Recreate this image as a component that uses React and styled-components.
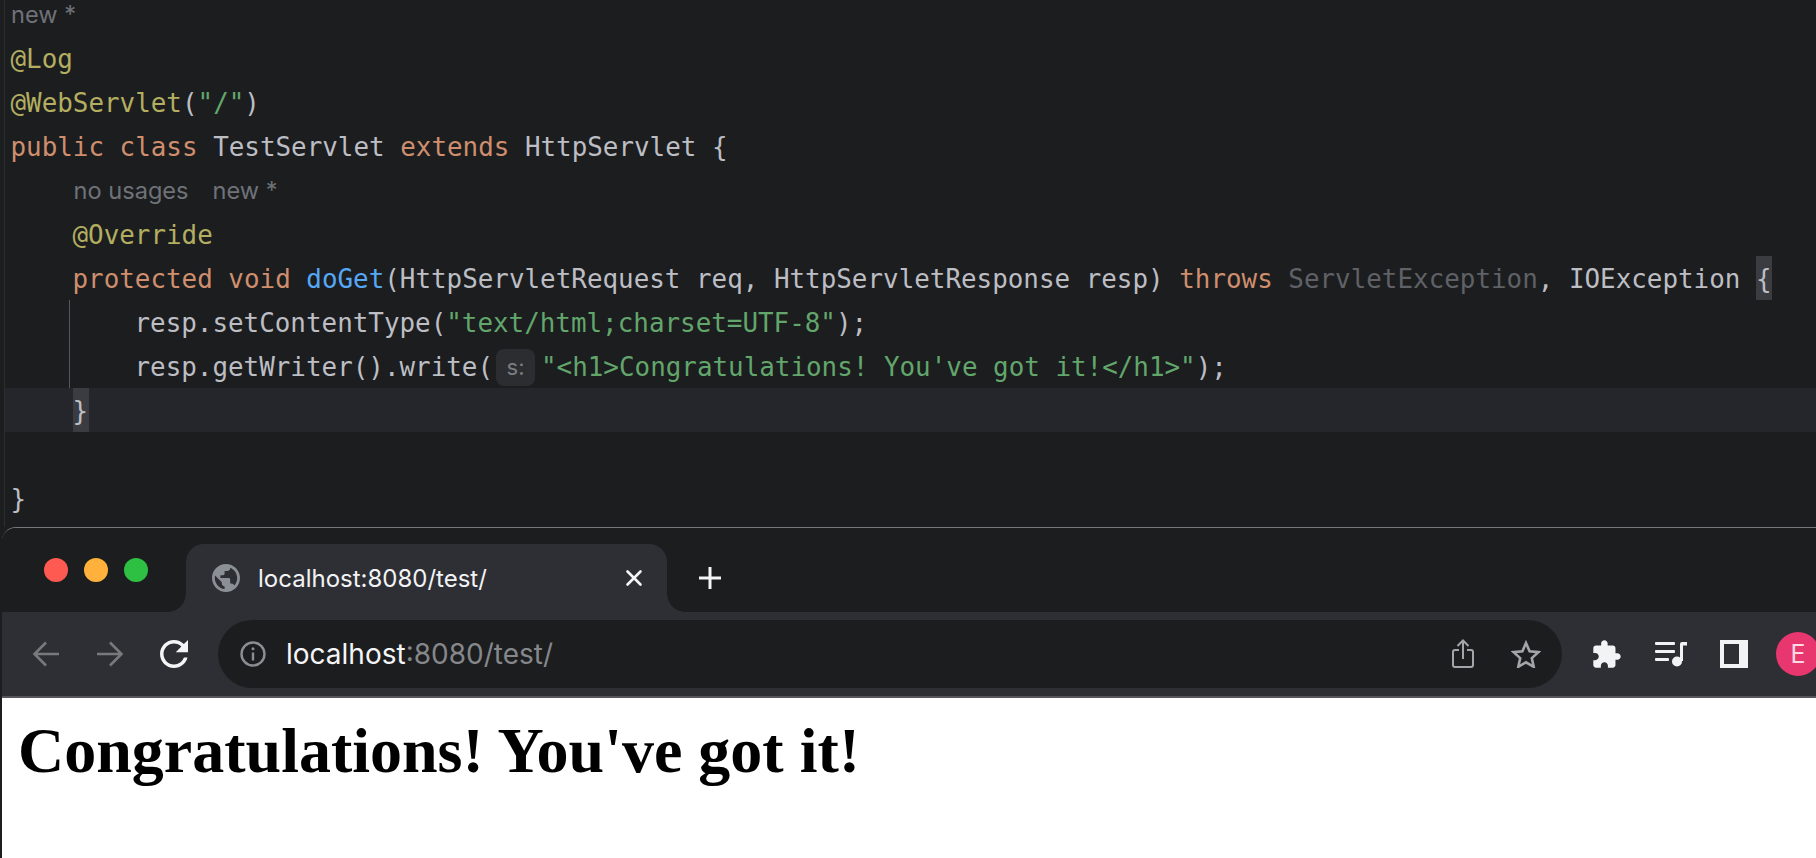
import React from "react";
import styled, { createGlobalStyle } from "styled-components";

const Global = createGlobalStyle`
  html, body {
    margin: 0;
    padding: 0;
    background: #1c1d1f;
  }
  #root {
    height: 858px;
    overflow: hidden;
  }
`;

const tokenColors = {
  key: "#cf8e6d",
  note: "#b3ae60",
  str: "#62a66c",
  fn: "#56a8f5",
  dim: "#5f6166",
  plain: "#bcbec4",
};

const Page = styled.div`
  width: 1816px;
  height: 858px;
  overflow: hidden;
  display: flex;
  flex-direction: column;
  background: #1c1d1f;
`;

const Editor = styled.div`
  height: 527px;
  flex: none;
  overflow: hidden;
  border-left: 1px solid #2b2d30;
  margin-left: 4px;
`;

const Lines = styled.div`
  margin-top: -8px;
`;

const Line = styled.div`
  position: relative;
  height: 44px;
  line-height: 46px;
  margin-left: -4px;
  font-family: "DejaVu Sans Mono", "Liberation Mono", monospace;
  font-size: 25.9px;
  color: #bcbec4;
  white-space: pre;
  background: ${(p) => (p.$current ? "#25262b" : "transparent")};
  box-sizing: border-box;
  padding-left: ${(p) => 9.5 + (p.$indent || 0) * 15.5}px;
`;

const Guide = styled.span`
  position: absolute;
  left: 68px;
  top: 0;
  bottom: 0;
  width: 1px;
  background: #55575c;
`;

const Token = styled.span`
  color: ${(p) => tokenColors[p.$kind] || tokenColors.plain};
`;

const Brace = styled.span`
  display: inline-block;
  height: 44px;
  width: 16px;
  vertical-align: top;
  background: #3a3c41;
`;

const Hint = styled.div`
  height: 44px;
  line-height: 46px;
  margin-left: -4px;
  padding-left: ${(p) => 10 + (p.$indent || 0) * 15.63}px;
  font-family: Inter, "Liberation Sans", sans-serif;
  font-size: 23.6px;
  color: #6f7278;
  white-space: pre;
`;

const HintGap = styled.span`
  display: inline-block;
  width: 24px;
`;

const ParamHint = styled.span`
  display: inline-flex;
  align-items: center;
  justify-content: center;
  width: 39px;
  height: 37px;
  margin: 0 6px 0 3px;
  vertical-align: 1px;
  border-radius: 8px;
  background: #2b2d30;
  font-family: Inter, "Liberation Sans", sans-serif;
  font-size: 22px;
  line-height: 37px;
  color: #7a7d83;
`;

const Browser = styled.div`
  flex: 1;
  margin-left: 2px;
  width: 1830px;
  display: flex;
  flex-direction: column;
  border-top: 1px solid #77787c;
  border-top-left-radius: 14px;
  overflow: hidden;
  background: #1c1d1f;
`;

const TabStrip = styled.div`
  height: 84px;
  flex: none;
  display: flex;
  align-items: flex-end;
  background: #1c1d1f;
`;

const Lights = styled.div`
  display: flex;
  gap: 16px;
  align-self: flex-start;
  margin: 30px 0 0 42px;
`;

const Light = styled.span`
  width: 24px;
  height: 24px;
  border-radius: 50%;
  background: ${(p) => p.$color};
`;

const Tab = styled.div`
  position: relative;
  width: 481px;
  height: 68px;
  margin-left: 38px;
  box-sizing: border-box;
  padding: 0 24px 0 26px;
  display: flex;
  align-items: center;
  gap: 18px;
  border-radius: 18px 18px 0 0;
  background: #2e2f34;
  font-family: Inter, "Liberation Sans", sans-serif;
  font-size: 24px;
  color: #f2f3f5;

  &::before,
  &::after {
    content: "";
    position: absolute;
    bottom: 0;
    width: 18px;
    height: 18px;
  }
  &::before {
    left: -18px;
    background: radial-gradient(circle at 0 0, #1c1d1f 17.5px, #2e2f34 18px);
  }
  &::after {
    right: -18px;
    background: radial-gradient(circle at 100% 0, #1c1d1f 17.5px, #2e2f34 18px);
  }
`;

const TabTitle = styled.span`
  flex: 1;
`;

const NewTab = styled.span`
  display: flex;
  align-self: center;
  margin-left: 31px;
  margin-top: 16px;
`;

const Toolbar = styled.div`
  height: 84px;
  flex: none;
  display: flex;
  align-items: center;
  background: #2e2f34;
  border-bottom: 2px solid #55565b;
`;

const NavIcons = styled.div`
  display: flex;
  align-items: center;
  gap: 36px;
  width: 216px;
  box-sizing: border-box;
  padding-left: 30px;
`;

const AddressBar = styled.div`
  width: 1344px;
  height: 68px;
  flex: none;
  box-sizing: border-box;
  padding: 0 22px 0 22px;
  display: flex;
  align-items: center;
  border-radius: 34px;
  background: #1c1d1f;
  font-family: Inter, "Liberation Sans", sans-serif;
  font-size: 28px;
`;

const Host = styled.span`
  margin-left: 20px;
  color: #f4f5f6;
`;

const Rest = styled.span`
  flex: 1;
  color: #85878a;
`;

const BarActions = styled.div`
  display: flex;
  align-items: center;
  gap: 37px;
  margin-right: -1px;
`;

const Extensions = styled.div`
  display: flex;
  align-items: center;
  gap: 33px;
  margin-left: 30px;
`;

const Avatar = styled.span`
  width: 44px;
  height: 44px;
  flex: none;
  margin-left: -5px;
  display: flex;
  align-items: center;
  justify-content: center;
  border-radius: 50%;
  background: #e8366f;
  font-family: Inter, "Liberation Sans", sans-serif;
  font-size: 25px;
  color: #ffd9e4;
`;

const Content = styled.div`
  flex: 1;
  background: #fff;
`;

const Heading = styled.h1`
  margin: 0;
  padding: 16px 0 0 16px;
  font-family: "Liberation Serif", "Times New Roman", serif;
  font-size: 64px;
  line-height: 74px;
  font-weight: 700;
  color: #000;
  white-space: nowrap;
`;

const GlobeIcon = () => (
  <svg width="28" height="28" viewBox="2 2 20 20" fill="#8b8f96">
    <path d="M12 2C6.48 2 2 6.48 2 12s4.48 10 10 10 10-4.48 10-10S17.52 2 12 2zm-1 17.93c-3.95-.49-7-3.85-7-7.93 0-.62.08-1.21.21-1.79L9 15v1c0 1.1.9 2 2 2v1.93zm6.9-2.54c-.26-.81-1-1.39-1.9-1.39h-1v-3c0-.55-.45-1-1-1H8v-2h2c.55 0 1-.45 1-1V7h2c1.1 0 2-.9 2-2v-.41c2.93 1.19 5 4.06 5 7.41 0 2.08-.8 3.97-2.1 5.39z" />
  </svg>
);

const CloseIcon = () => (
  <svg width="18" height="18" viewBox="0 0 18 18" stroke="#f4f5f6" strokeWidth="2.6" strokeLinecap="round">
    <path d="M2.5 2.5l13 13M15.5 2.5l-13 13" />
  </svg>
);

const PlusIcon = () => (
  <svg width="24" height="24" viewBox="0 0 24 24" stroke="#f4f5f6" strokeWidth="3">
    <path d="M12 1v22M1 12h22" />
  </svg>
);

const ArrowIcon = ({ flip }) => (
  <svg width="28" height="28" viewBox="0 0 28 28" fill="none" stroke="#77797d" strokeWidth="2.6" transform={flip ? "scale(-1 1)" : undefined}>
    <path d="M27 14H3M14 2.5L2.5 14 14 25.5" />
  </svg>
);

const ReloadIcon = () => (
  <svg width="28" height="28" viewBox="4 4 16 16" fill="#f4f5f6">
    <path d="M17.65 6.35C16.2 4.9 14.21 4 12 4c-4.42 0-7.99 3.58-7.99 8s3.57 8 7.99 8c3.73 0 6.84-2.55 7.73-6h-2.08c-.82 2.33-3.04 4-5.65 4-3.31 0-6-2.69-6-6s2.69-6 6-6c1.66 0 3.14.69 4.22 1.78L13 11h7V4l-2.35 2.35z" />
  </svg>
);

const InfoIcon = () => (
  <svg width="26" height="26" viewBox="0 0 26 26" fill="none" stroke="#8b8e93" strokeWidth="2.4">
    <circle cx="13" cy="13" r="11.5" />
    <path d="M13 11.5v8" />
    <circle cx="13" cy="7.8" r="1.5" fill="#8b8e93" stroke="none" />
  </svg>
);

const ShareIcon = () => (
  <svg width="22" height="30" viewBox="0 0 22 30" fill="none" stroke="#a3a5a8" strokeWidth="2">
    <path d="M7 11H3a2 2 0 0 0-2 2v13a2 2 0 0 0 2 2h16a2 2 0 0 0 2-2V13a2 2 0 0 0-2-2h-4" />
    <path d="M11 20V2M5.5 7L11 1.5 16.5 7" />
  </svg>
);

const StarIcon = () => (
  <svg width="30" height="28" viewBox="0 0 30 28" fill="none" stroke="#a3a5a8" strokeWidth="2.6">
    <path d="M15 3l3.6 8.2 8.9.9-6.7 6 1.9 8.7L15 22.3l-7.7 4.5 1.9-8.7-6.7-6 8.9-.9z" />
  </svg>
);

const PuzzleIcon = () => (
  <svg width="30" height="30" viewBox="1 0 23 23" fill="#f2f3f5">
    <path d="M20.5 11H19V7c0-1.1-.9-2-2-2h-4V3.5C13 2.12 11.88 1 10.5 1S8 2.12 8 3.5V5H4c-1.1 0-1.99.9-1.99 2v3.8H3.5c1.49 0 2.7 1.21 2.7 2.7s-1.21 2.7-2.7 2.7H2V20c0 1.1.9 2 2 2h3.8v-1.5c0-1.49 1.21-2.7 2.7-2.7 1.49 0 2.7 1.21 2.7 2.7V22H17c1.1 0 2-.9 2-2v-4h1.5c1.38 0 2.5-1.12 2.5-2.5S21.88 11 20.5 11z" />
  </svg>
);

const QueueIcon = () => (
  <svg width="32" height="26" viewBox="0 0 32 26" fill="#f2f3f5">
    <rect x="0" y="1" width="20" height="3" rx="1" />
    <rect x="0" y="9" width="20" height="3" rx="1" />
    <rect x="0" y="17" width="14" height="3" rx="1" />
    <circle cx="22" cy="20.5" r="5" />
    <path d="M25 20V3a2 2 0 0 1 2-2h5v3.4h-4V20z" />
  </svg>
);

const SidebarIcon = () => (
  <svg width="28" height="28" viewBox="0 0 28 28">
    <rect width="28" height="28" fill="#f2f3f5" />
    <rect x="4" y="4" width="15" height="20" fill="#2e2f34" />
  </svg>
);

export default function App() {
  return (
    <Page>
      <Global />
      <Editor>
        <Lines>
          <Hint>new *</Hint>
          <Line>
            <Token $kind="note">@Log</Token>
          </Line>
          <Line>
            <Token $kind="note">@WebServlet</Token>(<Token $kind="str">"/"</Token>)
          </Line>
          <Line>
            <Token $kind="key">public class </Token>TestServlet <Token $kind="key">extends </Token>HttpServlet {"{"}
          </Line>
          <Hint $indent={4}>
            no usages
            <HintGap />
            new *
          </Hint>
          <Line $indent={4}>
            <Token $kind="note">@Override</Token>
          </Line>
          <Line $indent={4}>
            <Token $kind="key">protected void </Token>
            <Token $kind="fn">doGet</Token>(HttpServletRequest req, HttpServletResponse resp){" "}
            <Token $kind="key">throws </Token>
            <Token $kind="dim">ServletException</Token>, IOException <Brace>{"{"}</Brace>
          </Line>
          <Line $indent={8}>
            <Guide />
            resp.setContentType(<Token $kind="str">"text/html;charset=UTF-8"</Token>);
          </Line>
          <Line $indent={8}>
            <Guide />
            resp.getWriter().write(<ParamHint>s:</ParamHint>
            <Token $kind="str">"&lt;h1&gt;Congratulations! You've got it!&lt;/h1&gt;"</Token>);
          </Line>
          <Line $indent={4} $current>
            <Brace>{"}"}</Brace>
          </Line>
          <Line />
          <Line>{"}"}</Line>
        </Lines>
      </Editor>
      <Browser>
        <TabStrip>
          <Lights>
            <Light $color="#ff5a52" />
            <Light $color="#ffb13b" />
            <Light $color="#2dc043" />
          </Lights>
          <Tab>
            <GlobeIcon />
            <TabTitle>localhost:8080/test/</TabTitle>
            <CloseIcon />
          </Tab>
          <NewTab>
            <PlusIcon />
          </NewTab>
        </TabStrip>
        <Toolbar>
          <NavIcons>
            <ArrowIcon />
            <ArrowIcon flip />
            <ReloadIcon />
          </NavIcons>
          <AddressBar>
            <InfoIcon />
            <Host>localhost</Host>
            <Rest>:8080/test/</Rest>
            <BarActions>
              <ShareIcon />
              <StarIcon />
            </BarActions>
          </AddressBar>
          <Extensions>
            <PuzzleIcon />
            <QueueIcon />
            <SidebarIcon />
            <Avatar>E</Avatar>
          </Extensions>
        </Toolbar>
        <Content>
          <Heading>Congratulations! You've got it!</Heading>
        </Content>
      </Browser>
    </Page>
  );
}
